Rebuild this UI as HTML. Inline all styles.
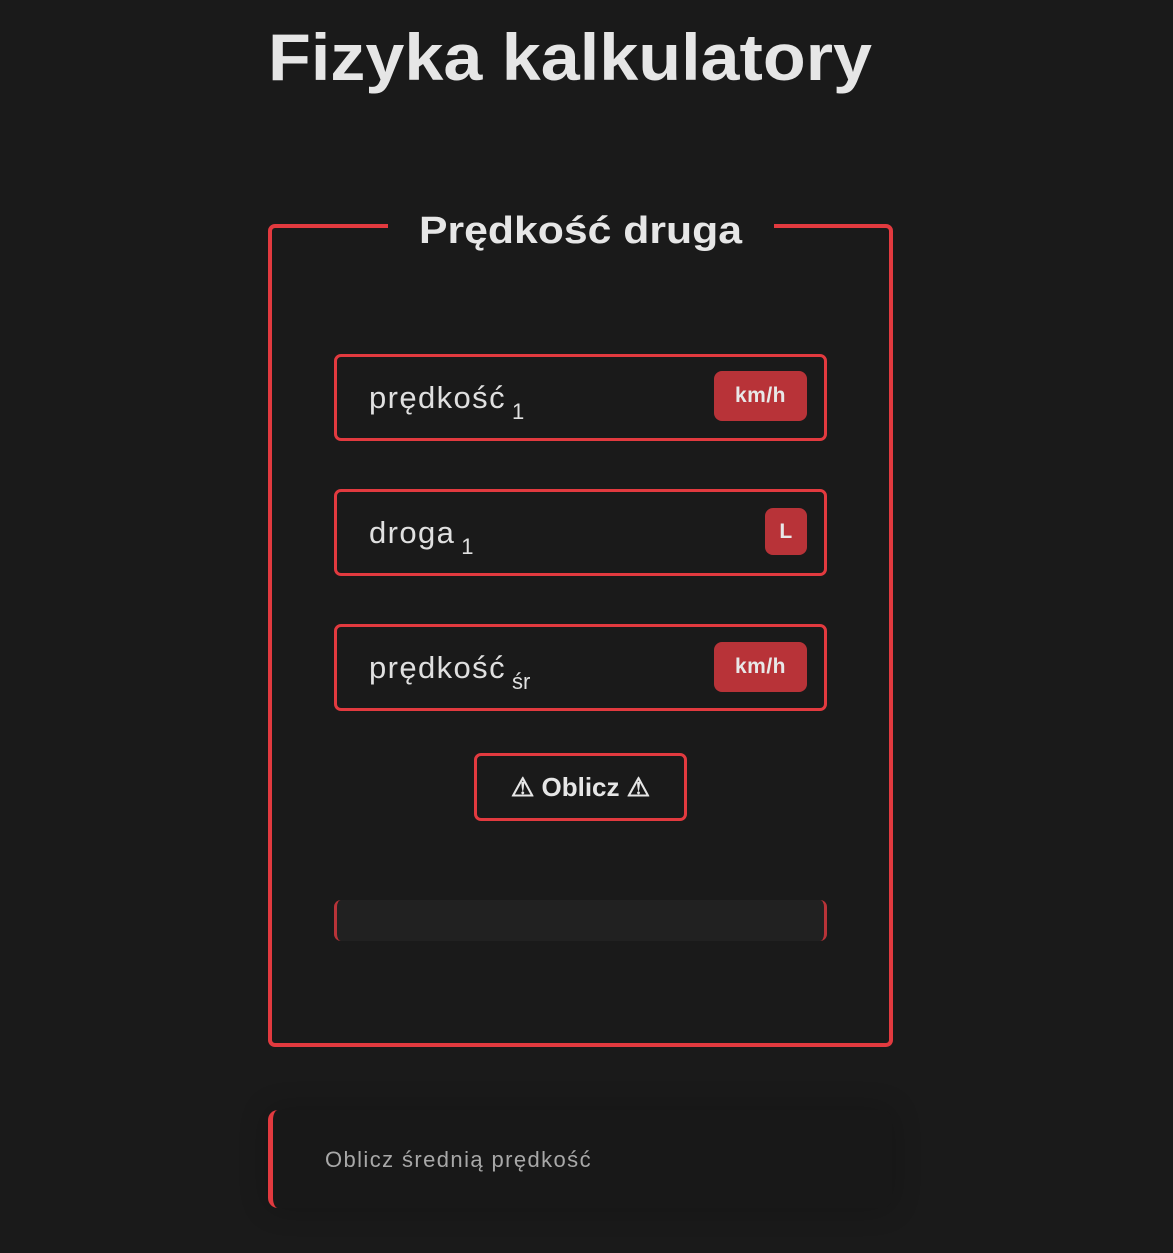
<!DOCTYPE html>
<html><head><meta charset="utf-8"><style>
*{box-sizing:border-box;margin:0;padding:0}
body{width:1173px;height:1253px;background:#1a1a1a;position:relative;overflow:hidden;font-family:"Liberation Sans",sans-serif;color:#e6e6e6}
.a{position:absolute}
.fs{left:268px;top:224px;width:625px;height:823px;border:4px solid #e23a3f;border-radius:7px}
.gap{left:388px;top:218px;width:386px;height:16px;background:#1a1a1a}
.inp{left:334px;width:493px;height:87px;border:3px solid #e23a3f;border-radius:7px}
.lbl{position:absolute;left:32px;top:23px;font-size:31px;color:#e0e0e0;letter-spacing:1.4px;white-space:nowrap}
.lbl sub{font-size:22px;vertical-align:-11px;margin-left:6px;letter-spacing:0}
.bd{position:absolute;background:#b83338;border-radius:8px;color:#e8e8e8;font-weight:bold;font-size:21px;display:flex;align-items:center;justify-content:center;letter-spacing:.5px}
</style></head><body>
<svg class="a" style="left:0;top:0" width="1173" height="260">
<text x="268" y="80" font-family="Liberation Sans" font-weight="bold" font-size="66" fill="#e6e6e6" textLength="604" lengthAdjust="spacingAndGlyphs">Fizyka kalkulatory</text>
</svg>
<div class="a fs"></div>
<div class="a gap"></div>
<svg class="a" style="left:0;top:200px" width="1173" height="60">
<text x="419" y="43" font-family="Liberation Sans" font-weight="bold" font-size="38" fill="#e6e6e6" textLength="323" lengthAdjust="spacingAndGlyphs">Prędkość druga</text>
</svg>
<div class="a inp" style="top:354px"><div class="lbl">prędkość<sub>1</sub></div><div class="bd" style="left:377px;top:14px;width:93px;height:50px">km/h</div></div>
<div class="a inp" style="top:489px"><div class="lbl">droga<sub>1</sub></div><div class="bd" style="left:428px;top:16px;width:42px;height:47px">L</div></div>
<div class="a inp" style="top:624px"><div class="lbl">prędkość<sub>śr</sub></div><div class="bd" style="left:377px;top:15px;width:93px;height:50px">km/h</div></div>
<div class="a" style="left:474px;top:753px;width:213px;height:68px;border:3px solid #e23a3f;border-radius:7px;display:flex;align-items:center;justify-content:center;font-weight:bold;font-size:26px;color:#e6e6e6">⚠ Oblicz ⚠</div>
<div class="a" style="left:334px;top:900px;width:493px;height:41px;background:#212121;border-left:3px solid #b83338;border-right:3px solid #b83338;border-radius:7px"></div>
<div class="a" style="left:268px;top:1110px;width:624px;height:98px;background:#181818;border-left:5px solid #e23a3f;border-radius:10px;box-shadow:0 0 30px rgba(0,0,0,.2)"></div>
<div class="a" style="left:325px;top:1147px;font-size:22px;color:#a8a8a8;letter-spacing:1.4px">Oblicz średnią prędkość</div>
</body></html>
